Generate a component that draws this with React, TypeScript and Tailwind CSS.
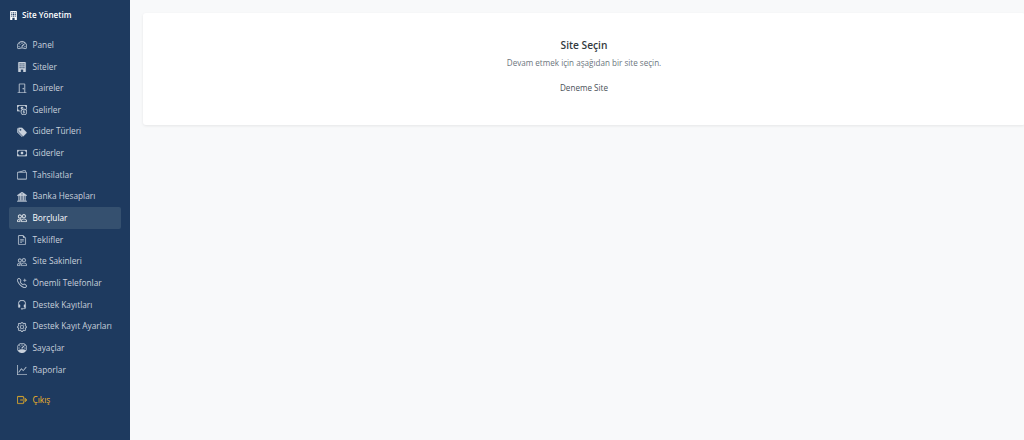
import React from "react";
import {
  BsBuildingFill, BsSpeedometer2, BsDoorClosed, BsCashCoin, BsTagsFill, BsCash, BsWallet2, BsBank2,
  BsPeople, BsFileEarmarkText, BsTelephonePlus, BsHeadset, BsGear, BsSpeedometer, BsGraphUp, BsBoxArrowRight,
} from "react-icons/bs";

const items: [string, React.ComponentType<{ className?: string }>][] = [
  ["Panel", BsSpeedometer2],
  ["Siteler", BsBuildingFill],
  ["Daireler", BsDoorClosed],
  ["Gelirler", BsCashCoin],
  ["Gider Türleri", BsTagsFill],
  ["Giderler", BsCash],
  ["Tahsilatlar", BsWallet2],
  ["Banka Hesapları", BsBank2],
  ["Borçlular", BsPeople],
  ["Teklifler", BsFileEarmarkText],
  ["Site Sakinleri", BsPeople],
  ["Önemli Telefonlar", BsTelephonePlus],
  ["Destek Kayıtları", BsHeadset],
  ["Destek Kayıt Ayarları", BsGear],
  ["Sayaçlar", BsSpeedometer],
  ["Raporlar", BsGraphUp],
];

export default function App() {
  return (
    <div className="flex h-[440px] w-[1024px] overflow-hidden bg-[#f8f9fa] font-['Open_Sans','Noto_Sans',sans-serif] text-[8.3px]">
      <aside className="flex w-[130px] shrink-0 flex-col bg-[#1e3a5f] px-[9px] pt-[10px]">
        <div className="flex h-[11px] items-center gap-[4px] text-[8.1px] font-semibold leading-none text-white">
          <BsBuildingFill className="h-[9px] w-[9px]" />
          <span>Site Yönetim</span>
        </div>
        <nav className="mt-[13.2px] flex flex-col">
          {items.map(([label, Icon]) => (
            <div
              key={label}
              className={`flex h-[21.67px] items-center gap-[5.5px] rounded-[2px] pl-[8px] ${
                label === "Borçlular" ? "bg-[#35506f] text-white" : "text-[#c9d1dc]"
              }`}
            >
              <Icon className="h-[10px] w-[10px] shrink-0 stroke-current stroke-[0.3]" />
              <span className="whitespace-nowrap leading-none">{label}</span>
            </div>
          ))}
          <div className="mt-[8.8px] flex h-[21.67px] items-center gap-[5.5px] pl-[8px] text-[#f0b429]">
            <BsBoxArrowRight className="h-[10px] w-[10px] shrink-0 stroke-current stroke-[0.4]" />
            <span className="leading-none">Çıkış</span>
          </div>
        </nav>
      </aside>
      <main className="min-w-0 flex-1 pl-[13px] pt-[13px]">
        <section className="flex h-[112px] w-[882px] flex-col items-center rounded-[3px] bg-white pt-[25px] shadow-[0_1px_3px_rgba(0,0,0,0.08)]">
          <h1 className="text-[10.2px] font-semibold leading-[14px] text-[#343a40]">Site Seçin</h1>
          <p className="mt-[4px] text-[8.1px] leading-[14px] text-[#6c757d]">Devam etmek için aşağıdan bir site seçin.</p>
          <div className="mt-[11px] text-[8.1px] leading-[14px] text-[#495057]">Deneme Site</div>
        </section>
      </main>
    </div>
  );
}
